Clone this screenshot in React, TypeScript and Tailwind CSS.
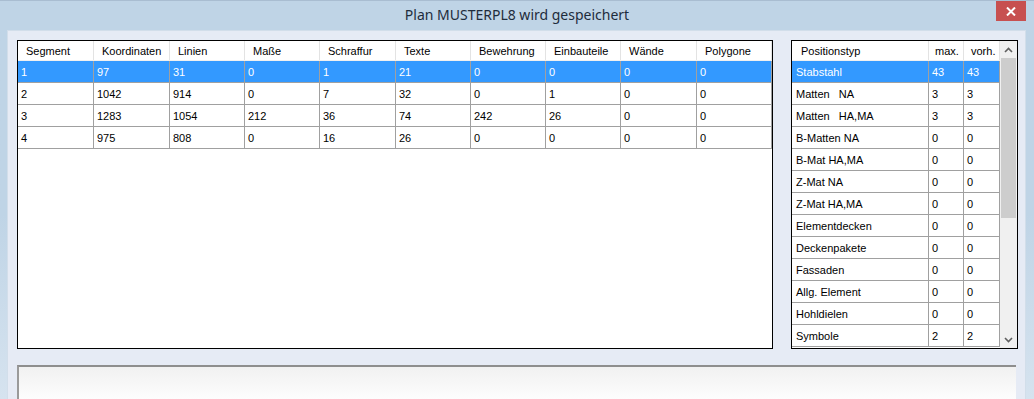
import React from "react";

const leftCols = [76, 76, 75, 75, 76, 75, 75, 75, 76, 75];
const leftHeaders = [
  "Segment",
  "Koordinaten",
  "Linien",
  "Maße",
  "Schraffur",
  "Texte",
  "Bewehrung",
  "Einbauteile",
  "Wände",
  "Polygone",
];
const leftRows = [
  ["1", "97", "31", "0", "1", "21", "0", "0", "0", "0"],
  ["2", "1042", "914", "0", "7", "32", "0", "1", "0", "0"],
  ["3", "1283", "1054", "212", "36", "74", "242", "26", "0", "0"],
  ["4", "975", "808", "0", "16", "26", "0", "0", "0", "0"],
];

const rightCols = [137, 35, 36];
const rightHeaders = ["Positionstyp", "max.", "vorh."];
const rightHeaderPad = [9, 6, 7];
const rightRows = [
  ["Stabstahl", "43", "43"],
  ["Matten   NA", "3", "3"],
  ["Matten   HA,MA", "3", "3"],
  ["B-Matten NA", "0", "0"],
  ["B-Mat HA,MA", "0", "0"],
  ["Z-Mat NA", "0", "0"],
  ["Z-Mat HA,MA", "0", "0"],
  ["Elementdecken", "0", "0"],
  ["Deckenpakete", "0", "0"],
  ["Fassaden", "0", "0"],
  ["Allg. Element", "0", "0"],
  ["Hohldielen", "0", "0"],
  ["Symbole", "2", "2"],
];

const font = { fontFamily: '"Liberation Sans", Arial, sans-serif' };

function Chevron({ up }: { up?: boolean }) {
  return (
    <svg width="9" height="6" viewBox="0 0 9 6">
      <path
        d={up ? "M1 5 L4.5 1.5 L8 5" : "M1 1 L4.5 4.5 L8 1"}
        fill="none"
        stroke="#606060"
        strokeWidth="1.6"
      />
    </svg>
  );
}

export default function App() {
  return (
    <div
      className="w-[1034px] h-[399px] overflow-hidden bg-[#bfd4e6] relative flex flex-col border-t border-[#a9bdd1]"
      style={font}
    >
      {/* title bar */}
      <div className="h-[29px] shrink-0 flex items-center justify-center">
        <span
          className="text-[14px] text-[#1e2c3c] leading-none pb-[1px]"
          style={{ fontFamily: '"Noto Sans", "Open Sans", sans-serif' }}
        >
          Plan MUSTERPL8 wird gespeichert
        </span>
      </div>
      {/* close button */}
      <div className="absolute left-[996px] top-0 w-[30px] h-[20px] bg-[#c75050] flex items-center justify-center">
        <svg width="10" height="9" viewBox="0 0 10 9">
          <path d="M1 0.5 L9 8.5 M9 0.5 L1 8.5" stroke="#ffffff" strokeWidth="2" />
        </svg>
      </div>

      <div className="flex flex-1 min-h-0">
        <div className="w-[7px] shrink-0 bg-gradient-to-b from-[#bfd4e6] via-[#bfd4e6] to-[#d6e3ef]" />
        <div className="w-[1019px] shrink-0 bg-[#e6ebf5] border-l border-t border-r border-[#d2deea] pt-[9px] pl-[9px] pr-[9px] flex flex-col">
          <div className="flex w-[1001px] shrink-0 gap-[18px]">
            {/* left table */}
            <div className="w-[756px] h-[309px] border border-black bg-white shrink-0 text-[11px] text-black">
              <div className="flex h-[20px] border-b border-[#f0f0f0]">
                {leftHeaders.map((h, i) => (
                  <div
                    key={h}
                    className="h-full border-r border-[#e3e3e3] pl-[8px] pt-[2px] flex items-center"
                    style={{ width: leftCols[i] }}
                  >
                    {h}
                  </div>
                ))}
              </div>
              {leftRows.map((r, ri) => (
                <div
                  key={ri}
                  className={`flex h-[22px] border-b border-[#a0a0a0] ${
                    ri === 0 ? "bg-[#3399ff] text-white" : ""
                  }`}
                >
                  {r.map((c, ci) => (
                    <div
                      key={ci}
                      className="h-full border-r border-[#a0a0a0] pl-[3px] pt-[2px] flex items-center"
                      style={{ width: leftCols[ci] }}
                    >
                      {c}
                    </div>
                  ))}
                </div>
              ))}
            </div>

            {/* right table */}
            <div className="w-[227px] h-[309px] border border-black bg-white shrink-0 flex text-[11px] text-black">
              <div className="w-[208px]">
                <div className="flex h-[20px] border-b border-[#f0f0f0]">
                  {rightHeaders.map((h, i) => (
                    <div
                      key={h}
                      className="h-full border-r border-[#e3e3e3] pt-[2px] flex items-center"
                      style={{ width: rightCols[i], paddingLeft: rightHeaderPad[i] }}
                    >
                      {h}
                    </div>
                  ))}
                </div>
                {rightRows.map((r, ri) => (
                  <div
                    key={ri}
                    className={`flex h-[22px] border-b border-[#a0a0a0] ${
                      ri === 0 ? "bg-[#3399ff] text-white" : ""
                    }`}
                  >
                    {r.map((c, ci) => (
                      <div
                        key={ci}
                        className={`h-full border-r border-[#a0a0a0] pt-[2px] flex items-center whitespace-pre ${
                          ci === 0 ? "pl-[4px]" : "pl-[3px]"
                        }`}
                        style={{ width: rightCols[ci] }}
                      >
                        {c}
                      </div>
                    ))}
                  </div>
                ))}
              </div>
              {/* scrollbar */}
              <div className="w-[17px] h-full bg-[#f0f0f0] flex flex-col">
                <div className="h-[17px] flex items-center justify-center">
                  <Chevron up />
                </div>
                <div className="h-[160px] mx-[1px] bg-[#cdcdcd]" />
                <div className="flex-1" />
                <div className="h-[17px] flex items-center justify-center">
                  <Chevron />
                </div>
              </div>
            </div>
          </div>

          {/* bottom panel */}
          <div className="mt-[16px] w-[999px] flex-1 border-t-2 border-l-2 border-t-[#8e8e8e] border-l-[#9a9a9a] bg-gradient-to-b from-[#f1f1f1] to-[#fdfdfd]" />
        </div>
        <div className="w-[8px] shrink-0 bg-gradient-to-b from-[#bfd4e6] via-[#bfd4e6] to-[#d6e3ef]" />
      </div>
    </div>
  );
}
